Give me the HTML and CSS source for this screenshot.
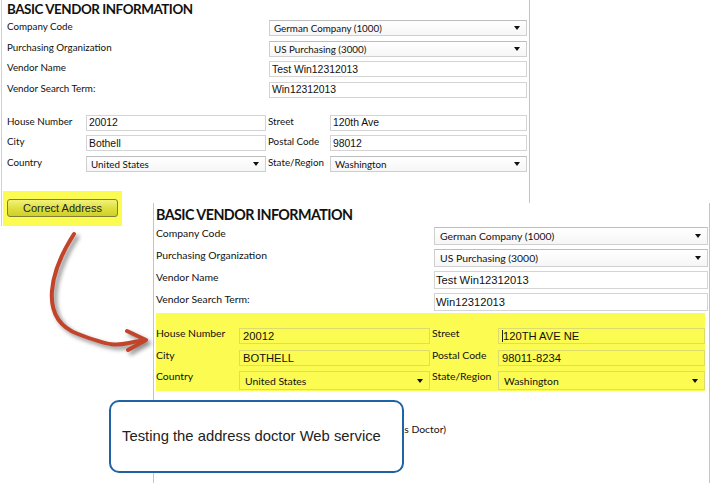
FILE: index.html
```html
<!DOCTYPE html>
<html>
<head>
<meta charset="utf-8">
<link rel="stylesheet" href="styles.css">
</head>
<body>
<div class="stage">

  <section class="panel p1">
    <h2 class="title">BASIC VENDOR INFORMATION</h2>
    <div class="rows">
      <span class="lbl">Company Code</span>
      <div class="sel">German Company (1000)<i class="caret"></i></div>
      <span class="lbl">Purchasing Organization</span>
      <div class="sel">US Purchasing (3000)<i class="caret"></i></div>
      <span class="lbl">Vendor Name</span>
      <div class="inp">Test Win12312013</div>
      <span class="lbl">Vendor Search Term:</span>
      <div class="inp">Win12312013</div>
    </div>
    <div class="addr">
      <span class="lbl">House Number</span>
      <div class="inp">20012</div>
      <span class="lbl lbl2">Street</span>
      <div class="inp">120th Ave</div>
      <span class="lbl">City</span>
      <div class="inp">Bothell</div>
      <span class="lbl lbl2">Postal Code</span>
      <div class="inp">98012</div>
      <span class="lbl">Country</span>
      <div class="sel">United States<i class="caret"></i></div>
      <span class="lbl lbl2">State/Region</span>
      <div class="sel">Washington<i class="caret"></i></div>
    </div>
    <div class="btn-hl">
      <button class="btn">Correct Address</button>
    </div>
  </section>

  <section class="panel p2">
    <h2 class="title">BASIC VENDOR INFORMATION</h2>
    <div class="rows">
      <span class="lbl">Company Code</span>
      <div class="sel">German Company (1000)<i class="caret"></i></div>
      <span class="lbl">Purchasing Organization</span>
      <div class="sel">US Purchasing (3000)<i class="caret"></i></div>
      <span class="lbl">Vendor Name</span>
      <div class="inp">Test Win12312013</div>
      <span class="lbl">Vendor Search Term:</span>
      <div class="inp">Win12312013</div>
    </div>
    <div class="addr hl">
      <span class="lbl">House Number</span>
      <div class="inp">20012</div>
      <span class="lbl lbl2">Street</span>
      <div class="inp"><span class="cursor"></span>120TH AVE NE</div>
      <span class="lbl">City</span>
      <div class="inp">BOTHELL</div>
      <span class="lbl lbl2">Postal Code</span>
      <div class="inp">98011-8234</div>
      <span class="lbl">Country</span>
      <div class="sel">United States<i class="caret"></i></div>
      <span class="lbl lbl2">State/Region</span>
      <div class="sel">Washington<i class="caret"></i></div>
    </div>
    <div class="extra">s Doctor)</div>
  </section>

  <svg class="arrow" width="170" height="140" viewBox="0 220 170 140">
    <path d="M74,234 C52,268 36,318 78,334 S118,344 140,341" fill="none" stroke="#c2452b" stroke-width="4" stroke-linecap="round"/>
    <path d="M127,331 L146,340 L128,350" fill="none" stroke="#c2452b" stroke-width="4" stroke-linecap="round" stroke-linejoin="round"/>
  </svg>

  <div class="callout">Testing the address doctor Web service</div>
</div>
</body>
</html>
```

FILE: styles.css
```css
html, body {
  margin: 0;
  padding: 0;
  background: #ffffff;
}

.stage {
  position: relative;
  width: 717px;
  height: 483px;
  overflow: hidden;
  background: #ffffff;
  font-family: "Lato", "Open Sans", sans-serif;
  color: #111;
}

.panel {
  position: absolute;
  box-sizing: border-box;
  background: #ffffff;
}

.title {
  margin: 0;
  font-weight: 700;
  color: #111;
  white-space: nowrap;
}

.lbl {
  white-space: nowrap;
  color: #111;
}

.sel, .inp {
  position: relative;
  box-sizing: border-box;
  display: flex;
  align-items: center;
  white-space: nowrap;
  overflow: hidden;
}

.sel {
  border: 1px solid #cfcfcf;
  border-top-color: #bdbdbd;
  background: linear-gradient(#ffffff, #f6f6f6);
  font-family: "Lato", "Open Sans", sans-serif;
  color: #111;
}

.inp {
  border: 1px solid #d4d4d4;
  background: #ffffff;
  font-family: "Liberation Sans", Arial, sans-serif;
  color: #111;
}

.caret {
  position: absolute;
  right: 6px;
  top: 50%;
  margin-top: -2px;
  width: 0;
  height: 0;
  border-left: 3.5px solid transparent;
  border-right: 3.5px solid transparent;
  border-top: 4px solid #111;
}

/* ---------- panel 1 ---------- */
.p1 {
  left: 0;
  top: 0;
  width: 530px;
  height: 203px;
  padding-left: 7px;
  border-right: 1px solid #c4c4c4;
}

.p1::before {
  content: "";
  position: absolute;
  left: 1px;
  top: 0;
  width: 1px;
  height: 226px;
  background: #d0d0d0;
}

.p1 .title {
  font-size: 13.4px;
  line-height: 18px;
  letter-spacing: -0.45px;
}

.p1 .lbl {
  font-size: 9.8px;
  line-height: 12px;
}

.p1 .sel {
  font-size: 9.8px;
  padding-left: 4px;
}

.p1 .inp {
  font-size: 10.4px;
  padding-left: 2px;
}

.p1 .rows {
  margin-top: 2px;
  display: grid;
  grid-template-columns: 262px 258px;
  grid-auto-rows: 16px;
  row-gap: 4.67px;
}

.p1 .addr {
  margin-top: 17px;
  display: grid;
  grid-template-columns: 79px 180px 64px 197px;
  grid-auto-rows: 16px;
  row-gap: 4.5px;
}

.p1 .lbl2 {
  padding-left: 2px;
}

.btn-hl {
  margin-top: 19px;
  margin-left: -4px;
  width: 119px;
  height: 35px;
  box-sizing: border-box;
  padding: 8px 0 0 4px;
  background: #fbfb52;
}

.btn {
  display: block;
  width: 111px;
  height: 18px;
  margin: 0;
  padding: 0;
  border: 1px solid #7f7f36;
  border-radius: 3px;
  background: linear-gradient(#f2f27a, #dede3c 55%, #cfcf2c);
  font-family: "Liberation Sans", Arial, sans-serif;
  font-size: 11px;
  color: #1d1d1d;
  line-height: 16px;
  text-align: center;
}

/* ---------- panel 2 ---------- */
.p2 {
  left: 153px;
  top: 203px;
  width: 557px;
  height: 280px;
  padding: 3px 0 0 2px;
  border-left: 1px solid #c4c4c4;
  border-right: 1px solid #c4c4c4;
}

.p2 .title {
  font-size: 14.3px;
  line-height: 18px;
  letter-spacing: -0.55px;
}

.p2 .lbl {
  font-size: 10.4px;
  line-height: 12px;
}

.p2 .sel {
  font-size: 10.4px;
  padding-left: 5px;
}

.p2 .inp {
  font-size: 11.2px;
  padding-left: 1px;
}

.p2 .rows {
  margin-top: 3px;
  display: grid;
  grid-template-columns: 278px 274px;
  grid-auto-rows: 18px;
  row-gap: 4px;
}

.p2 .addr {
  margin-top: 2px;
  width: 549px;
  box-sizing: border-box;
  padding: 15px 0 1px 0;
  display: grid;
  grid-template-columns: 83px 191px 68px 207px;
  grid-template-rows: 16px 16px 19px;
  row-gap: 5.5px;
  background: #fbfb52;
}

.p2 .addr .lbl {
  margin-top: -1px;
}

.p2 .addr .lbl2 {
  padding-left: 2px;
}

.p2 .addr .inp {
  background: transparent;
  border-color: #dcdc6a;
  padding-left: 3px;
}

.p2 .addr .sel {
  background: transparent;
  border-color: #dada7a;
  padding-left: 5px;
}

.cursor {
  display: inline-block;
  width: 1px;
  height: 12px;
  background: #222;
}

.extra {
  margin-top: 31px;
  width: 290px;
  font-size: 10.4px;
  line-height: 14px;
  text-align: right;
  white-space: nowrap;
  color: #111;
}

/* ---------- overlays ---------- */
.arrow {
  position: absolute;
  left: 0;
  top: 220px;
  filter: drop-shadow(3px 3px 2px rgba(0, 0, 0, 0.45));
}

.callout {
  position: absolute;
  left: 109px;
  top: 400px;
  width: 295px;
  height: 73px;
  box-sizing: border-box;
  border: 2.5px solid #1d63a6;
  border-radius: 10px;
  background: #ffffff;
  display: flex;
  align-items: center;
  padding: 0 0 2px 11px;
  font-family: "Liberation Sans", Arial, sans-serif;
  font-size: 14.8px;
  color: #222;
}
```
